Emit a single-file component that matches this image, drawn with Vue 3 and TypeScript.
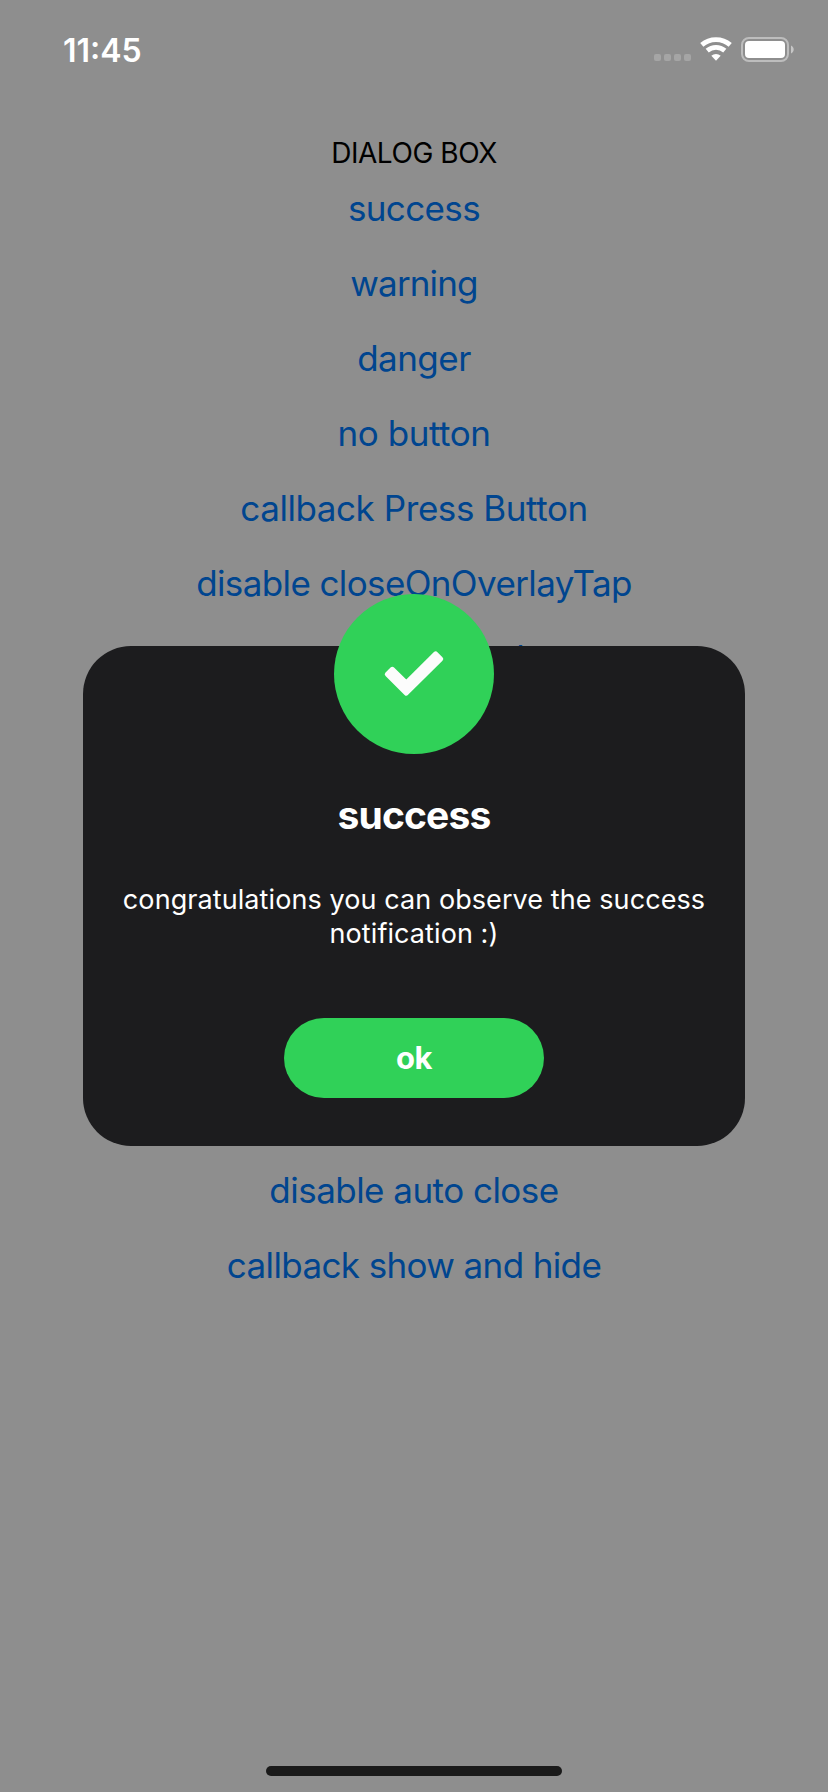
<script setup lang="ts">
interface Row {
  label: string
  tone: string
}

const dialogRows: Row[] = [
  { label: 'success', tone: 'snug' },
  { label: 'warning', tone: 'tight' },
  { label: 'danger', tone: 'normal' },
  { label: 'no button', tone: 'loose' },
  { label: 'callback Press Button', tone: 'loose' },
  { label: 'disable closeOnOverlayTap', tone: 'snug' },
  { label: 'l', tone: 'peek' },
]

const toastRows: Row[] = [
  { label: 'disable auto close', tone: 'normal' },
  { label: 'callback show and hide', tone: 'snug' },
]
</script>

<template>
  <main class="screen">
    <header class="status">
      <span class="time">11:45</span>
      <div class="indicators">
        <span class="signal"><i v-for="n in 4" :key="n"></i></span>
        <svg class="wifi" width="32" height="24" viewBox="0 0 32 24">
          <path d="M1.800 7.900a21.500 21.500 0 0 1 28.400 0M7.200 13.600a13.500 13.500 0 0 1 17.600 0" fill="none" stroke="#fff" stroke-width="4.800" />
          <path d="M11.300 18.800a7 7 0 0 1 9.400 0L16 23.800z" fill="#fff" />
        </svg>
        <svg class="battery" width="54" height="26" viewBox="0 0 54 26">
          <rect x="1" y="1" width="46" height="23" rx="7" fill="none" stroke="#fff" stroke-opacity=".42" stroke-width="2" />
          <rect x="4" y="4" width="40" height="17" rx="4" fill="#fff" />
          <path d="M50 8.500v8c3.600-1.500 3.600-6.500 0-8z" fill="#fff" fill-opacity=".5" />
        </svg>
      </div>
    </header>

    <section class="group">
      <h2 class="heading">DIALOG BOX</h2>
      <button v-for="row in dialogRows" :key="row.label" class="link" :class="row.tone">{{ row.label }}</button>
    </section>
    <section class="group toast">
      <button v-for="row in toastRows" :key="row.label" class="link" :class="row.tone">{{ row.label }}</button>
    </section>

    <div class="home"></div>

    <div class="dialog" role="dialog">
      <div class="badge">
        <svg width="160" height="160" viewBox="0 0 160 160">
          <path d="M58.300 75.300 53.300 80.300 72.300 99.100 106.700 64.900 101.700 59.900 72.300 89z" fill="#fcfcfc" stroke="#fcfcfc" stroke-width="5" stroke-linejoin="round" />
        </svg>
      </div>
      <h1 class="title">success</h1>
      <p class="message">congratulations you can observe the success<br />notification :)</p>
      <button class="ok">ok</button>
    </div>
  </main>
</template>

<style>
body { background: #8e8e8e; }
</style>

<style scoped>
.screen {
  position: relative;
  box-sizing: border-box;
  width: 828px;
  height: 1792px;
  overflow: hidden;
  background: #8e8e8e;
  font-family: Inter, "Liberation Sans", sans-serif;
  display: flex;
  flex-direction: column;
}
button { border: 0; padding: 0; background: none; font: inherit; color: inherit; }
.status {
  display: flex;
  justify-content: space-between;
  height: 132px;
  padding: 0 33px 0 63px;
  color: #fff;
}
.time { font-size: 32px; font-weight: 600; line-height: 38px; margin-top: 32px; }
.indicators { display: flex; align-items: flex-start; padding-top: 37px; }
.signal { display: flex; gap: 3px; margin: 17px 9px 0 0; }
.signal i { width: 7px; height: 7px; border-radius: 2px; background: #a5a5a5; }
.wifi { margin-right: 9px; }
.group { display: flex; flex-direction: column; align-items: center; }
.heading {
  margin: 0;
  height: 39px;
  line-height: 42px;
  font-size: 28px;
  font-weight: 400;
  letter-spacing: -0.45px;
  color: #000;
}
.link { height: 75px; font-size: 35px; line-height: 75px; color: #00458f; white-space: nowrap; }
.tight { letter-spacing: -0.85px; }
.snug { letter-spacing: -0.62px; }
.normal { letter-spacing: -0.53px; }
.loose { letter-spacing: -0.43px; }
.peek { padding-left: 213px; }
.toast { margin-top: 457px; }
.home {
  width: 296px;
  height: 10px;
  margin: auto auto 16px;
  border-radius: 5px;
  background: #1a1a1a;
}
.dialog {
  position: absolute;
  left: 83px;
  top: 646px;
  box-sizing: border-box;
  width: 662px;
  height: 500px;
  padding-top: 142px;
  border-radius: 48px;
  background: #1c1c1e;
  color: #fff;
  text-align: center;
  display: flex;
  flex-direction: column;
  align-items: center;
}
.badge {
  position: absolute;
  top: -52px;
  left: 251px;
  width: 160px;
  height: 160px;
  border-radius: 50%;
  background: #30d158;
}
.badge svg { display: block; }
.title { margin: 0; font-size: 39px; line-height: 54px; font-weight: 700; letter-spacing: -0.85px; }
.message { margin: 41px 0 0; font-size: 27px; line-height: 34px; letter-spacing: 0.08px; white-space: nowrap; }
.ok {
  width: 260px;
  height: 80px;
  margin-top: 67px;
  padding-bottom: 2px;
  border-radius: 40px;
  background: #30d158;
  font-size: 31px;
  font-weight: 700;
  letter-spacing: -0.4px;
  color: #fff;
}
</style>
